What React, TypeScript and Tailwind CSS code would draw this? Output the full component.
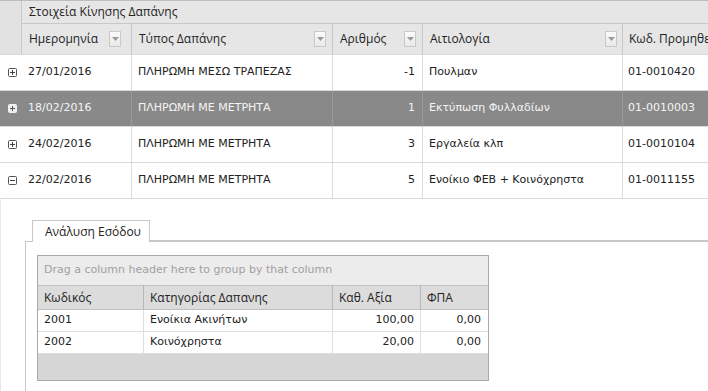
import React from 'react';

const body = { fontFamily: '"DejaVu Sans", Verdana, sans-serif' };
const head = { fontFamily: '"Open Sans", "Noto Sans", sans-serif' };

const FilterBtn = () => (
  <span className="ml-auto flex h-[16px] w-[12px] items-center justify-center border border-[#c9c9c9] bg-gradient-to-b from-[#fbfbfb] to-[#e9e9e9]">
    <svg width="7" height="4" viewBox="0 0 7 4">
      <path d="M0 0 L7 0 L3.5 4 Z" fill="#9a9a9a" />
    </svg>
  </span>
);

const ExpandIcon = ({ open, dark }: { open?: boolean; dark?: boolean }) => (
  <svg width="9" height="9" viewBox="0 0 9 9">
    <rect x="0.5" y="0.5" width="8" height="8" rx="1" fill={dark ? '#eeeeee' : '#ffffff'} stroke={dark ? '#f2f2f2' : '#555555'} />
    <path d="M2 4.5 H7" stroke={dark ? '#555' : '#444'} />
    {!open && <path d="M4.5 2 V7" stroke={dark ? '#555' : '#444'} />}
  </svg>
);

const rows = [
  { date: '27/01/2016', type: 'ΠΛΗΡΩΜΗ ΜΕΣΩ ΤΡΑΠΕΖΑΣ', num: '-1', desc: 'Πουλμαν', code: '01-0010420' },
  { date: '18/02/2016', type: 'ΠΛΗΡΩΜΗ ΜΕ ΜΕΤΡΗΤΑ', num: '1', desc: 'Εκτύπωση Φυλλαδίων', code: '01-0010003', sel: true },
  { date: '24/02/2016', type: 'ΠΛΗΡΩΜΗ ΜΕ ΜΕΤΡΗΤΑ', num: '3', desc: 'Εργαλεία κλπ', code: '01-0010104' },
  { date: '22/02/2016', type: 'ΠΛΗΡΩΜΗ ΜΕ ΜΕΤΡΗΤΑ', num: '5', desc: 'Ενοίκιο ΦΕΒ + Κοινόχρηστα', code: '01-0011155', open: true },
];

const detail = [
  { code: '2001', cat: 'Ενοίκια Ακινήτων', val: '100,00', vat: '0,00' },
  { code: '2002', cat: 'Κοινόχρηστα', val: '20,00', vat: '0,00' },
];

export default function App() {
  return (
    <div className="h-[391px] w-[708px] overflow-hidden bg-white text-[#222]">
      {/* header */}
      <div className="flex border-t border-[#bdbdbd] bg-[#e6e6e6]">
        <div className="w-[22px] shrink-0 border-r border-[#c8c8c8] bg-[#e2e2e2]" />
        <div className="flex-1">
          <div className="flex h-[23px] items-center border-b border-[#c8c8c8] pl-[7px] text-[12px]" style={head}>
            Στοιχεία Κίνησης Δαπάνης
          </div>
          <div className="flex h-[30px] text-[12px]" style={head}>
            <div className="flex w-[110px] shrink-0 items-center border-r border-[#c8c8c8] pl-[7px] pr-[10px]">
              Ημερομηνία
              <FilterBtn />
            </div>
            <div className="flex w-[201px] shrink-0 items-center border-r border-[#c8c8c8] pl-[7px] pr-[6px]">
              Τύπος Δαπάνης
              <FilterBtn />
            </div>
            <div className="flex w-[90px] shrink-0 items-center border-r border-[#c8c8c8] pl-[7px] pr-[6px]">
              Αριθμός
              <FilterBtn />
            </div>
            <div className="flex w-[200px] shrink-0 items-center border-r border-[#c8c8c8] pl-[7px] pr-[5px]">
              Αιτιολογία
              <FilterBtn />
            </div>
            <div className="flex flex-1 items-center whitespace-nowrap pl-[6px]">Κωδ. Προμηθευτή</div>
          </div>
        </div>
      </div>

      {/* body rows */}
      {rows.map((r) => (
        <div
          key={r.date}
          className={`flex h-[36px] border-t border-[#d9d9d9] text-[11px] ${r.sel ? 'bg-[#898989] text-[#f4f4f4]' : 'bg-white'}`}
          style={body}
        >
          <div className="flex w-[22px] shrink-0 items-center justify-center pl-[3px]">
            <ExpandIcon open={r.open} dark={r.sel} />
          </div>
          <div className={`flex w-[110px] shrink-0 items-center border-r pl-[6px] ${r.sel ? 'border-[#9a9a9a]' : 'border-[#dcdcdc]'}`}>{r.date}</div>
          <div className={`flex w-[201px] shrink-0 items-center border-r pl-[6px] ${r.sel ? 'border-[#9a9a9a]' : 'border-[#dcdcdc]'}`}>{r.type}</div>
          <div className={`flex w-[90px] shrink-0 items-center justify-end border-r pr-[7px] ${r.sel ? 'border-[#9a9a9a]' : 'border-[#dcdcdc]'}`}>{r.num}</div>
          <div className={`flex w-[200px] shrink-0 items-center border-r pl-[6px] ${r.sel ? 'border-[#9a9a9a]' : 'border-[#dcdcdc]'}`}>{r.desc}</div>
          <div className="flex flex-1 items-center whitespace-nowrap pl-[5px]">{r.code}</div>
        </div>
      ))}

      {/* detail */}
      <div className="flex h-[200px] border-t border-[#d9d9d9] border-l border-l-[#e8e8e8]">
        <div className="flex-1 pt-[21px] pl-[24px]">
          <div className="flex items-end">
            <div className="h-[22px] w-[7px] border-b border-[#c8c8c8]" />
            <div className="flex h-[22px] w-[118px] items-center border border-b-0 border-[#c8c8c8] bg-white pl-[12px] text-[12px]" style={head}>
              Ανάλυση Εσόδου
            </div>
            <div className="h-[22px] flex-1 border-b-2 border-[#c8c8c8]" />
          </div>
          <div className="h-[200px] border-l border-[#c8c8c8] pt-[13px] pl-[11px]">
            <div className="w-[452px] border border-[#a9a9a9] text-[11px]" style={body}>
              <div className="flex h-[30px] items-center border-b border-[#c0c0c0] bg-[#ececec] pl-[6px] text-[#a0a0a0]">
                Drag a column header here to group by that column
              </div>
              <div className="flex h-[24px] border-b border-[#c0c0c0] bg-[#dcdcdc] text-[12px]" style={head}>
                <div className="flex w-[106px] items-center border-r border-[#b8b8b8] pl-[6px]">Κωδικός</div>
                <div className="flex w-[189px] items-center border-r border-[#b8b8b8] pl-[6px]">Κατηγορίας Δαπανης</div>
                <div className="flex w-[88px] items-center border-r border-[#b8b8b8] pl-[6px]">Καθ. Αξία</div>
                <div className="flex flex-1 items-center pl-[6px]">ΦΠΑ</div>
              </div>
              {detail.map((d) => (
                <div key={d.code} className="flex h-[22px] border-b border-[#dedede] bg-white">
                  <div className="flex w-[106px] items-center border-r border-[#dedede] pl-[6px]">{d.code}</div>
                  <div className="flex w-[189px] items-center border-r border-[#dedede] pl-[6px]">{d.cat}</div>
                  <div className="flex w-[88px] items-center justify-end border-r border-[#dedede] pr-[6px]">{d.val}</div>
                  <div className="flex flex-1 items-center justify-end pr-[7px]">{d.vat}</div>
                </div>
              ))}
              <div className="h-[26px] bg-[#d6d6d6]" />
            </div>
          </div>
        </div>
      </div>
    </div>
  );
}
